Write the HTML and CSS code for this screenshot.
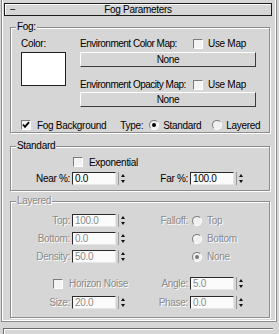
FILE: index.html
```html
<!DOCTYPE html>
<html lang="en">
<head>
  <meta charset="UTF-8" />
  <title>Fog Parameters</title>
  <link rel="stylesheet" href="styles.css">
</head>
<body>
  <div class="panel">
    <div class="rollout-title"><span class="toggle">−</span><span>Fog Parameters</span><span></span></div>

    <fieldset class="group fog">
      <legend>Fog:</legend>
      <div class="fog-maps">
        <div class="color-col">
          <div class="text-row">Color:</div>
          <div class="swatch"></div>
        </div>
        <div class="map-col">
          <div class="text-row map-head">
            <span class="map-label">Environment Color Map:</span>
            <span class="check"><span class="box"></span><span class="check-text">Use Map</span></span>
          </div>
          <div class="map-btn">None</div>
          <div class="text-row map-head second">
            <span class="map-label">Environment Opacity Map:</span>
            <span class="check"><span class="box"></span><span class="check-text">Use Map</span></span>
          </div>
          <div class="map-btn tight">None</div>
        </div>
      </div>
      <div class="type-row">
        <span class="check">
          <span class="box"><svg width="8" height="8" viewBox="0 0 8 8"><polyline points="1,3.5 3,5.8 7,1.2" fill="none" stroke="#000" stroke-width="1.8"/></svg></span>
          <span class="check-text">Fog Background</span>
        </span>
        <span class="type-label">Type:</span>
        <span class="radio-opt first"><span class="radio on"></span>Standard</span>
        <span class="radio-opt"><span class="radio"></span>Layered</span>
      </div>
    </fieldset>

    <fieldset class="group standard">
      <legend>Standard</legend>
      <div class="check-row exp"><span class="box"></span><span class="check-text">Exponential</span></div>
      <div class="spin-row near-row">
        <div class="half">
          <span class="lbl">Near %:</span><span class="field">0.0</span><span class="spin"></span>
        </div>
        <div class="half right">
          <span class="lbl">Far %:</span><span class="field">100.0</span><span class="spin"></span>
        </div>
      </div>
    </fieldset>

    <fieldset class="group layered disabled">
      <legend>Layered</legend>
      <div class="spin-row">
        <div class="half">
          <span class="lbl">Top:</span><span class="field">100.0</span><span class="spin"></span>
        </div>
        <div class="half right">
          <span class="lbl">Falloff:</span><span class="radio"></span><span class="radio-text">Top</span>
        </div>
      </div>
      <div class="spin-row">
        <div class="half">
          <span class="lbl">Bottom:</span><span class="field">0.0</span><span class="spin"></span>
        </div>
        <div class="half right">
          <span class="lbl"></span><span class="radio"></span><span class="radio-text">Bottom</span>
        </div>
      </div>
      <div class="spin-row">
        <div class="half">
          <span class="lbl">Density:</span><span class="field">50.0</span><span class="spin"></span>
        </div>
        <div class="half right">
          <span class="lbl"></span><span class="radio on"></span><span class="radio-text">None</span>
        </div>
      </div>
      <div class="spin-row noise-row">
        <div class="half noise">
          <span class="box"></span><span class="check-text">Horizon Noise</span>
        </div>
        <div class="half right">
          <span class="lbl">Angle:</span><span class="field">5.0</span><span class="spin"></span>
        </div>
      </div>
      <div class="spin-row">
        <div class="half">
          <span class="lbl">Size:</span><span class="field">20.0</span><span class="spin"></span>
        </div>
        <div class="half right">
          <span class="lbl">Phase:</span><span class="field">0.0</span><span class="spin"></span>
        </div>
      </div>
    </fieldset>
  </div>
  <div class="next-rollout"></div>
</body>
</html>
```

FILE: styles.css
```css
:root {
  --panel: #d6d6d6;
  --shade: #8c8c8c;
  --dark: #1c1c1c;
  --light: #ffffff;
  --muted: #8a8a8a;
}

body {
  margin: 0;
  background: var(--panel);
  font-family: "Liberation Sans", Arial, sans-serif;
  font-size: 10px;
  letter-spacing: -0.3px;
  color: #000;
  overflow: hidden;
}

.panel {
  margin: 0 2px 0 1px;
  padding: 3px 0 3px;
  border: 1px solid var(--shade);
  border-top: none;
  box-shadow: inset 1px 0 var(--light), inset -1px -1px var(--light);
}

.rollout-title {
  display: grid;
  grid-template-columns: 1fr auto 1fr;
  margin: 0 4px 0 2px;
  height: 11px;
  line-height: 11px;
  border: 1px solid var(--dark);
  box-shadow: inset 1px 1px var(--light);
}

.toggle {
  padding-left: 5px;
}

/* Group boxes */
.group {
  margin: 5px 6px 0 8px;
  padding: 5px 0 1px 10px;
  border: 1px solid var(--shade);
  box-shadow: inset 1px 1px var(--light), 1px 1px var(--light);
  min-width: 0;
}

.group legend {
  margin-left: -5px;
  padding: 0 1px;
  line-height: 12px;
  background: var(--panel);
}

.standard {
  margin-top: 7px;
  padding-top: 4px;
  padding-bottom: 5px;
}

.layered {
  margin-top: 4px;
  padding-top: 7px;
  padding-bottom: 8px;
}

.text-row {
  height: 12px;
  line-height: 12px;
  white-space: nowrap;
}

/* Fog */
.fog-maps {
  display: flex;
  gap: 14px;
}

.color-col {
  width: 45px;
}

.swatch {
  margin-top: 2px;
  height: 32px;
  background: #fff;
  border: 1px solid #202020;
}

.map-col {
  width: 176px;
}

.map-head {
  display: flex;
  align-items: center;
}

.map-head.second {
  margin-top: 12px;
}

.map-label {
  width: 113px;
  letter-spacing: -0.5px;
}

.map-btn {
  margin-top: 2px;
  height: 13px;
  line-height: 13px;
  text-align: center;
  border: 1px solid;
  border-color: var(--light) #3a3a3a #3a3a3a var(--light);
}

.map-btn.tight {
  margin-top: 1px;
}

.check,
.check-row {
  display: inline-flex;
  align-items: center;
  white-space: nowrap;
}

.box {
  display: inline-flex;
  align-items: center;
  justify-content: center;
  box-sizing: border-box;
  width: 10px;
  height: 10px;
  background: #f4f4f4;
  border: 1px solid;
  border-color: #7c7c7c var(--light) var(--light) #7c7c7c;
  flex: none;
}

.check-text {
  margin-left: 5px;
  white-space: nowrap;
}

.type-row {
  display: flex;
  align-items: center;
  height: 12px;
  margin-top: 12px;
}

.type-row .check-text {
  margin-left: 6px;
}

.type-label {
  margin-left: 14px;
}

.radio-opt {
  display: inline-flex;
  align-items: center;
  gap: 4px;
  margin-left: 11px;
}

.radio-opt.first {
  margin-left: 6px;
}

.radio {
  display: inline-flex;
  align-items: center;
  justify-content: center;
  box-sizing: border-box;
  width: 10px;
  height: 10px;
  border-radius: 50%;
  border: 1px solid;
  border-color: #7c7c7c var(--light) var(--light) #7c7c7c;
  background: #f0f0f0;
  flex: none;
}

.radio.on::after {
  content: "";
  width: 4px;
  height: 4px;
  border-radius: 50%;
  background: #000;
}

/* Spinner rows */
.check-row.exp {
  height: 12px;
  padding-left: 52px;
}

.check-row.exp .check-text {
  margin-left: 6px;
}

.spin-row {
  display: flex;
  height: 13px;
  margin-top: 5px;
}

.layered legend + .spin-row {
  margin-top: 0;
}

.near-row {
  margin-top: 3px;
}

.noise-row {
  margin-top: 14px;
}

.noise-row + .spin-row {
  margin-top: 6px;
}

.half {
  display: flex;
  align-items: center;
  width: 106px;
  flex: none;
}

.half.right {
  margin-left: 9px;
  width: auto;
}

.half.noise {
  padding-left: 32px;
  width: 74px;
}

.half.noise .check-text {
  margin-left: 6px;
}

.lbl {
  width: 49px;
  margin-right: 2px;
  text-align: right;
  white-space: nowrap;
  flex: none;
}

.half.right .lbl {
  width: 52px;
}

.half.right .radio {
  margin-left: 2px;
}

.radio-text {
  margin-left: 5px;
}

.field {
  box-sizing: border-box;
  width: 44px;
  height: 13px;
  line-height: 11px;
  padding-left: 2px;
  background: #fbfbfb;
  border: 1px solid;
  border-color: #2a2a2a #e6e6e6 #e6e6e6 #2a2a2a;
  flex: none;
}

.spin {
  display: flex;
  flex-direction: column;
  justify-content: space-between;
  align-items: center;
  box-sizing: border-box;
  width: 9px;
  height: 13px;
  margin-left: 2px;
  padding: 2px 0;
  border-left: 1px solid #9a9a9a;
  flex: none;
}

.spin::before,
.spin::after {
  content: "";
  border-left: 2.5px solid transparent;
  border-right: 2.5px solid transparent;
}

.spin::before {
  border-bottom: 3px solid #111;
}

.spin::after {
  border-top: 3px solid #111;
}

/* Layered is disabled */
.disabled,
.disabled .field {
  color: var(--muted);
  text-shadow: 1px 1px 0 var(--light);
}

.disabled .radio.on::after {
  background: #777;
}

.next-rollout {
  margin: 6px 6px 0 3px;
  height: 12px;
  border-top: 1px solid #6a6a6a;
  border-left: 1px solid #6a6a6a;
  box-shadow: inset 1px 1px var(--light);
}
```
